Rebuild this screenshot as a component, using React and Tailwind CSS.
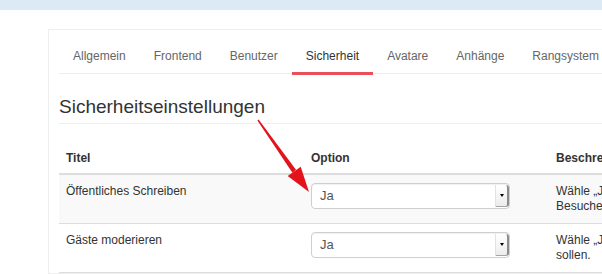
const tabs = [
  "Allgemein",
  "Frontend",
  "Benutzer",
  "Sicherheit",
  "Avatare",
  "Anhänge",
  "Rangsystem",
];

const rows = [
  {
    title: "Öffentliches Schreiben",
    value: "Ja",
    desc: ["Wähle „Ja“, wenn auch nicht registrierte", "Besucher Beiträge schreiben dürfen."],
  },
  {
    title: "Gäste moderieren",
    value: "Ja",
    desc: ["Wähle „Ja“, wenn Beiträge von Gästen erst freigeschaltet werden", "sollen."],
  },
];

function FakeSelect({ value }) {
  return (
    <div className="relative h-[26px] w-[199px] rounded-[4px] border border-[#cfcfcf] bg-white shadow-[inset_0_1px_1px_rgba(0,0,0,0.06)]">
      <span className="block pl-[8px] text-[13px] leading-[24px] text-[#555]">{value}</span>
      <div className="absolute bottom-[1px] right-0 top-[1px] flex w-[14px] items-center justify-center rounded-r-[3px] border-l border-r-2 border-b border-l-[#e2e2e2] border-r-[#8c8c8c] border-b-[#a5a5a5] bg-gradient-to-b from-white to-[#ececec]">
        <span className="block h-0 w-0 border-x-[2.5px] border-t-[3px] border-x-transparent border-t-black" />
      </div>
    </div>
  );
}

export default function App() {
  return (
    <div className="relative h-[274px] w-[602px] overflow-hidden bg-white font-['Liberation_Sans',Arial,sans-serif]">
      <div className="h-[10px] bg-[#dbeaf5]" />

      <div className="ml-[48px] mt-[19px] w-[720px] border border-[#eeeeee] pl-[10px] pt-[7px]">
        <nav className="flex border-b border-[#eeeeee] text-[12px] leading-[18px]">
          {tabs.map((t) => (
            <span
              key={t}
              className={`-mb-[2px] border-b-[3px] px-[14px] pb-[7px] pt-[10px] ${
                t === "Sicherheit"
                  ? "border-[#e9505c] text-[#333]"
                  : "border-transparent text-[#666]"
              }`}
            >
              {t}
            </span>
          ))}
        </nav>

        <h2 className="mt-[22px] text-[19px] leading-[21px] text-[#333]">
          Sicherheitseinstellungen
        </h2>
        <div className="mt-[6px] border-b border-[#eeeeee]" />

        <div className="mt-[19px] text-[12px] leading-[15px] text-[#333]">
          <div className="grid grid-cols-[244px_245px_1fr] border-b-2 border-[#dddddd] font-bold">
            <div className="pb-[7px] pl-[7px] pt-[8px]">Titel</div>
            <div className="pb-[7px] pl-[8px] pt-[8px]">Option</div>
            <div className="pb-[7px] pl-[8px] pt-[8px]">Beschreibung</div>
          </div>
          {rows.map((r, i) => (
            <div
              key={r.title}
              className={`grid grid-cols-[244px_245px_1fr] border-b border-[#dddddd] ${
                i === 0 ? "bg-[#f9f9f9]" : "bg-white"
              }`}
            >
              <div className="pb-[9px] pl-[7px] pt-[9px]">{r.title}</div>
              <div className="pb-[9px] pl-[8px] pt-[8px]">
                <FakeSelect value={r.value} />
              </div>
              <div className="whitespace-nowrap pb-[9px] pl-[8px] pt-[9px]">
                {r.desc[0]}
                <br />
                {r.desc[1]}
              </div>
            </div>
          ))}
        </div>
      </div>

      {/* annotation arrow */}
      <svg
        className="pointer-events-none absolute left-0 top-0"
        width="602"
        height="274"
        viewBox="0 0 602 274"
      >
        <polygon
          points="258.6,119.6 257.4,120.4 292.4,172.7 296,169.7"
          fill="#e3131b"
        />
        <polygon points="300.7,166.8 287.7,176 309,192" fill="#e3131b" />
      </svg>
    </div>
  );
}
